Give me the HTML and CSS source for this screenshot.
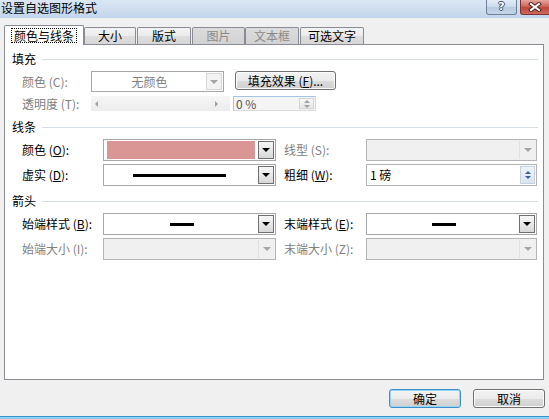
FILE: index.html
```html
<!DOCTYPE html>
<html>
<head>
<meta charset="utf-8">
<link rel="stylesheet" href="styles.css">
</head>
<body>
<div class="win">
  <div class="titlebar">
    <span class="title">设置自选图形格式</span>
    <div class="tbtns">
      <div class="help">?</div>
      <div class="close">
        <svg width="14" height="10" viewBox="0 0 14 10"><path d="M3 2 L11 8 M11 2 L3 8" stroke="#4a2520" stroke-width="4" stroke-linecap="square"/><path d="M3 2 L11 8 M11 2 L3 8" stroke="#ffffff" stroke-width="2" stroke-linecap="square"/></svg>
      </div>
    </div>
  </div>

  <div class="tabs">
    <div class="tab sel t1"><span class="focus">颜色与线条</span></div>
    <div class="tab t2">大小</div>
    <div class="tab t3">版式</div>
    <div class="tab dis t4">图片</div>
    <div class="tab dis t5">文本框</div>
    <div class="tab t6">可选文字</div>
  </div>

  <div class="panel">
    <div class="head h1"><span>填充</span><i></i></div>
    <div class="row r1">
      <span class="lbl la dim">颜色 (C):</span>
      <div class="dd nocolor w-fill">
        <div class="val center dim">无颜色</div>
        <div class="arr"><b class="tri"></b></div>
      </div>
      <div class="btn fillbtn">填充效果 (<u>F</u>)...</div>
    </div>
    <div class="row r2">
      <span class="lbl la dim">透明度 (T):</span>
      <div class="slider"><b class="tl"></b><b class="tr"></b></div>
      <div class="spin pct"><span class="sv">0 %</span><div class="sarr"><b class="up"></b><b class="dn"></b></div></div>
    </div>

    <div class="head h2"><span>线条</span><i></i></div>
    <div class="row r3">
      <span class="lbl lb">颜色 (<u>O</u>):</span>
      <div class="dd on w-l">
        <div class="val"><div class="swatch"></div></div>
        <div class="arr"><b class="tri"></b></div>
      </div>
      <span class="lbl lc dim">线型 (S):</span>
      <div class="dd dis w-r">
        <div class="val"></div>
        <div class="arr"><b class="tri"></b></div>
      </div>
    </div>
    <div class="row r4">
      <span class="lbl lb">虚实 (<u>D</u>):</span>
      <div class="dd on w-l">
        <div class="val center"><div class="line long"></div></div>
        <div class="arr"><b class="tri"></b></div>
      </div>
      <span class="lbl lc">粗细 (<u>W</u>):</span>
      <div class="spin weight w-r"><span class="sv">1 磅</span><div class="sarr"><b class="up"></b><b class="dn"></b></div></div>
    </div>

    <div class="head h3"><span>箭头</span><i></i></div>
    <div class="row r5">
      <span class="lbl lb">始端样式 (<u>B</u>):</span>
      <div class="dd on w-l">
        <div class="val center"><div class="line short"></div></div>
        <div class="arr"><b class="tri"></b></div>
      </div>
      <span class="lbl lc">末端样式 (<u>E</u>):</span>
      <div class="dd on w-r">
        <div class="val center"><div class="line short"></div></div>
        <div class="arr"><b class="tri"></b></div>
      </div>
    </div>
    <div class="row r6">
      <span class="lbl lb dim">始端大小 (I):</span>
      <div class="dd dis w-l">
        <div class="val"></div>
        <div class="arr"><b class="tri"></b></div>
      </div>
      <span class="lbl lc dim">末端大小 (Z):</span>
      <div class="dd dis w-r">
        <div class="val"></div>
        <div class="arr"><b class="tri"></b></div>
      </div>
    </div>
  </div>

  <div class="footer">
    <div class="btn ok">确定</div>
    <div class="btn cancel">取消</div>
  </div>
  <div class="bluebar"></div>
</div>
</body>
</html>
```

FILE: styles.css
```css
* { box-sizing: border-box; margin: 0; padding: 0; }
html, body { width: 549px; height: 419px; overflow: hidden; }
body {
  background: #f0f0f0;
  font-family: "Noto Sans CJK SC", "Liberation Sans", sans-serif;
  font-size: 12px;
  line-height: 14px;
  color: #000;
}
.win { width: 549px; height: 419px; display: flex; flex-direction: column; }

/* title bar */
.titlebar {
  height: 18px;
  background: linear-gradient(#dbe7f4, #c3d6ec);
  display: flex;
  justify-content: space-between;
  align-items: flex-start;
}
.title { padding: 1px 0 0 1px; line-height: 14px; color: #000; }
.tbtns { display: flex; gap: 3px; }
.help {
  width: 31px; height: 15px;
  border: 1px solid #6f7f95; border-top: none;
  border-radius: 0 0 3px 3px;
  background: linear-gradient(#e3ecf6, #cbdaeb 50%, #b6cae1 51%, #c4d6ea);
  color: #fff;
  font-family: "DejaVu Sans", sans-serif;
  font-weight: bold;
  font-size: 11px;
  line-height: 14px;
  text-align: center;
  text-shadow: 1px 0 0 #3e4f66, -1px 0 0 #3e4f66, 0 1px 0 #3e4f66, 0 -1px 0 #3e4f66;
}
.close {
  width: 29px; height: 15px;
  border: 1px solid #7d332c; border-top: none; border-right: none;
  border-radius: 0 0 0 3px;
  background: linear-gradient(#e4a59d, #d0685c 45%, #c0443a 55%, #cf6a5c);
  display: flex; align-items: center; justify-content: center;
}

/* tabs */
.tabs { height: 26px; display: flex; align-items: flex-end; padding-left: 4px; }
.tab {
  height: 17px;
  border: 1px solid #898c95; border-bottom: none;
  border-radius: 2px 2px 0 0;
  background: linear-gradient(#f3f3f3, #ebebeb 50%, #dedede 51%, #d6d6d6);
  display: flex; align-items: center; justify-content: center;
  line-height: 14px;
}
.tab.dis { background: linear-gradient(#dcdcdc, #d2d2d2); color: #8a8a8a; }
.tab.sel {
  height: 20px;
  margin-bottom: -1px;
  background: #fff;
  position: relative; z-index: 1;
  padding-bottom: 1px;
}
.focus { border: 1px dotted #000; padding: 0 2px; line-height: 13px; }
.t1 { width: 80px; }
.t2 { width: 52px; }
.t3 { width: 54px; margin-left: 1px; }
.t4 { width: 53px; margin-left: 1px; }
.t5 { width: 54px; }
.t6 { width: 64px; margin-left: 1px; }

/* panel */
.panel {
  margin-left: 4px;
  width: 540px; height: 336px;
  border: 1px solid #898c95;
  background: #fff;
  padding-right: 5px;
  display: flex; flex-direction: column;
}
.head { display: flex; align-items: center; height: 14px; padding-left: 7px; }
.head i { flex: 1; height: 1px; background: #d5dfe5; margin-left: 6px; }
.h1 { margin-top: 7px; }
.h2 { margin-top: 9px; }
.h3 { margin-top: 8px; }

.row { display: flex; align-items: flex-start; padding-left: 17px; }
.r1 { margin-top: 5px; height: 21px; }
.r2 { margin-top: 4px; height: 15px; }
.r3 { margin-top: 5px; height: 22px; }
.r4 { margin-top: 3px; height: 22px; }
.r5 { margin-top: 5px; height: 22px; }
.r6 { margin-top: 3px; height: 22px; }

.lbl { display: flex; align-items: center; height: 100%; white-space: nowrap; }
.la { width: 69px; }
.lb { width: 81px; }
.lc { width: 82px; margin-left: 8px; }
.dim { color: #808080; }

/* dropdowns */
.dd {
  display: flex; height: 100%;
  border: 1px solid #a7a7a7;
  background: #fff;
  padding: 1px;
}
.dd .val { flex: 1; display: flex; align-items: center; }
.dd .val.center { justify-content: center; }
.dd .arr { width: 16px; display: flex; align-items: center; justify-content: center; }
.tri { width: 0; height: 0; border-left: 4px solid transparent; border-right: 4px solid transparent; border-top: 4px solid #000; }
.dd.on .arr { border: 1px solid #6f6f6f; background: linear-gradient(#f6f6f6, #e8e8e8 50%, #d8d8d8); }
.dd.dis { background: #f0f0f0; border-color: #b5b5b5; }
.dd.dis .arr { border-left: 1px solid #e2e2e2; }
.dd.dis .tri, .dd.nocolor .tri { border-top-color: #a5a5a5; }
.dd.nocolor .arr { border: 1px solid #d6d6d6; background: #f3f3f3; }
.w-fill { width: 133px; }
.w-l { width: 173px; }
.w-r { width: 171px; }
.swatch { width: 100%; height: 100%; margin: 2px 3px 2px 2px; background: #da9694; }
.line { background: #000; }
.line.long { width: 93px; height: 3px; margin-left: -4px; }
.line.short { width: 24px; height: 3px; }

/* slider */
.slider {
  width: 139px; height: 15px;
  background: linear-gradient(#f6f6f6, #ececec);
  position: relative;
  margin-right: 3px;
}
.tl, .tr { position: absolute; top: 5px; width: 0; height: 0; border-top: 3px solid transparent; border-bottom: 3px solid transparent; }
.tl { left: 4px; border-right: 3px solid #a0a0a0; }
.tr { left: 124px; border-left: 3px solid #a0a0a0; }

/* spin */
.spin { display: flex; height: 100%; border: 1px solid #b3b3b3; background: #fff; }
.spin .sv { flex: 1; display: flex; align-items: center; padding-left: 2px; }
.sarr { width: 15px; display: flex; flex-direction: column; align-items: center; justify-content: center; gap: 2px; border: 1px solid #d4d4d4; background: linear-gradient(#f8f8f8, #e6e6e6); margin: 1px; }
.up, .dn { width: 0; height: 0; border-left: 3px solid transparent; border-right: 3px solid transparent; }
.up { border-bottom: 3px solid #a0a0a0; }
.dn { border-top: 3px solid #a0a0a0; }
.pct { width: 83px; border-color: #dadada; border-top-color: #a7c3e3; border-left-color: #a7c3e3; background: #f4f4f4; }
.pct .sv { color: #555; }
.weight .sv { padding-left: 3px; }
.weight .up { border-bottom-color: #3d5f95; }
.weight .dn { border-top-color: #3d5f95; }
.weight .sarr { background: linear-gradient(#eef3fa, #d9e3f0); border-color: #c8d2de; }

/* buttons */
.btn {
  display: flex; align-items: center; justify-content: center;
  border: 1px solid #707070; border-radius: 3px;
  background: linear-gradient(#f2f2f2, #ebebeb 50%, #dddddd 51%, #cfcfcf);
  box-shadow: inset 0 0 0 1px #fbfbfb;
  white-space: nowrap;
}
.fillbtn { width: 101px; height: 19px; margin-left: 11px; }
.footer { display: flex; justify-content: flex-end; gap: 12px; padding-right: 4px; margin-top: 9px; }
.ok, .cancel { width: 72px; height: 19px; }
.ok { border-color: #3c8fc9; box-shadow: inset 0 0 0 1px #93d6f7; }
.bluebar { margin-top: auto; height: 3px; border-top: 1px solid #3f91c9; background: #8ad0f2; }
```
